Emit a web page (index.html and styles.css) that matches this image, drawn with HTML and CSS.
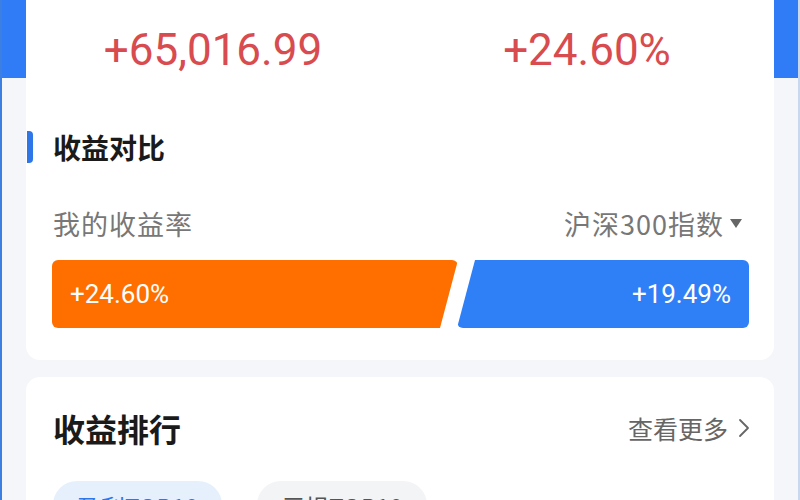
FILE: index.html
```html
<!DOCTYPE html>
<html lang="zh-CN">
<head>
<meta charset="utf-8">
<link rel="stylesheet" href="styles.css">
</head>
<body>
<div class="screen">
  <div class="header"></div>
  <section class="card summary">
    <div class="stats">
      <div class="stat">
        <div class="stat-label">累计收益</div>
        <div class="stat-value">+65,016.99</div>
      </div>
      <div class="stat">
        <div class="stat-label">累计收益率</div>
        <div class="stat-value">+24.60%</div>
      </div>
    </div>
    <div class="section-title">
      <span class="accent"></span>
      <h2>收益对比</h2>
    </div>
    <div class="compare-labels">
      <span>我的收益率</span>
      <span class="dropdown">沪深300指数<span class="caret"></span></span>
    </div>
    <div class="bars">
      <div class="bar bar-mine"><span>+24.60%</span></div>
      <div class="bar bar-index"><span>+19.49%</span></div>
    </div>
  </section>
  <section class="card ranking">
    <div class="ranking-head">
      <h2>收益排行</h2>
      <span class="more">查看更多<svg class="chev" viewBox="0 0 12 20" width="12" height="20"><path d="M2 2 L10 10 L2 18" fill="none" stroke="#666" stroke-width="1.8" stroke-linecap="round" stroke-linejoin="round"/></svg></span>
    </div>
    <div class="tabs">
      <span class="tab active">盈利TOP10</span>
      <span class="tab">亏损TOP10</span>
    </div>
  </section>
</div>
</body>
</html>
```

FILE: styles.css
```css
html, body {
  margin: 0;
  padding: 0;
}
body {
  width: 800px;
  height: 500px;
  overflow: hidden;
  background: #f4f6f9;
  font-family: "Noto Sans CJK SC", "Noto Sans", sans-serif;
  border-left: 2px solid #3d7fe0;
  border-right: 2px solid #c9d8ee;
  box-sizing: border-box;
}
.screen {
  margin-top: -26px;
}
.header {
  height: 104px;
  background: #2f7cf6;
  margin: 0 -2px;
}
.card {
  background: #fff;
  margin: 0 24px;
  border-radius: 14px;
}
.summary {
  margin-top: -104px;
  padding: 0 0 32px 0;
  border-radius: 0 0 14px 14px;
}
.stats {
  display: flex;
}
.stat {
  flex: 1;
  text-align: center;
}
.stat-label {
  font-size: 20px;
  line-height: 26px;
  color: #d0d0d0;
}
.stat-value {
  margin-top: 26px;
  font-family: Roboto, "DejaVu Sans", sans-serif;
  font-size: 44px;
  line-height: 48px;
  color: #d84b4f;
}
.section-title {
  display: flex;
  align-items: center;
  height: 34px;
  margin-top: 56px;
}
.accent {
  width: 6px;
  height: 32px;
  background: #2f76e8;
  border-radius: 0 4px 4px 0;
  margin-left: 1px;
}
.section-title h2 {
  margin: 0 0 0 20px;
  font-size: 28px;
  font-weight: 700;
  color: #1a1a1a;
}
.compare-labels {
  display: flex;
  justify-content: space-between;
  align-items: center;
  margin: 42px 32px 0 27px;
  height: 34px;
  font-size: 27px;
  letter-spacing: 1px;
  color: #777;
}
.dropdown {
  display: flex;
  align-items: center;
}
.caret {
  width: 0;
  height: 0;
  border-left: 6px solid transparent;
  border-right: 6px solid transparent;
  border-top: 9px solid #666;
  margin-left: 6px;
}
.bars {
  display: flex;
  margin: 20px 25px 0 26px;
  height: 68px;
}
.bar {
  display: flex;
  align-items: center;
  border-radius: 6px;
  font-family: Roboto, "DejaVu Sans", sans-serif;
  font-size: 26px;
  color: #fff;
}
.bar-mine {
  flex: 0 0 406px;
  background: #ff6f00;
  padding-left: 18px;
  box-sizing: border-box;
  clip-path: polygon(0 0, 100% 0, calc(100% - 18px) 100%, 0 100%);
}
.bar-index {
  flex: 1;
  margin-left: -1px;
  background: #2f7ff7;
  justify-content: flex-end;
  padding-right: 18px;
  clip-path: polygon(18px 0, 100% 0, 100% 100%, 0 100%);
}
.ranking {
  margin-top: 17px;
  padding: 26px 24px 0 27px;
}
.ranking-head {
  display: flex;
  justify-content: space-between;
  align-items: center;
  height: 50px;
}
.ranking-head h2 {
  margin: 0;
  font-size: 32px;
  font-weight: 700;
  color: #1a1a1a;
}
.more {
  display: flex;
  align-items: center;
  font-size: 25px;
  color: #666;
}
.chev {
  margin-left: 10px;
}
.tabs {
  display: flex;
  gap: 35px;
  margin-top: 28px;
}
.tab {
  padding: 8px 24px;
  border-radius: 24px;
  font-size: 24px;
  background: #f3f4f6;
  color: #555;
}
.tab.active {
  background: #e6f0fd;
  color: #2f76e8;
}
```
